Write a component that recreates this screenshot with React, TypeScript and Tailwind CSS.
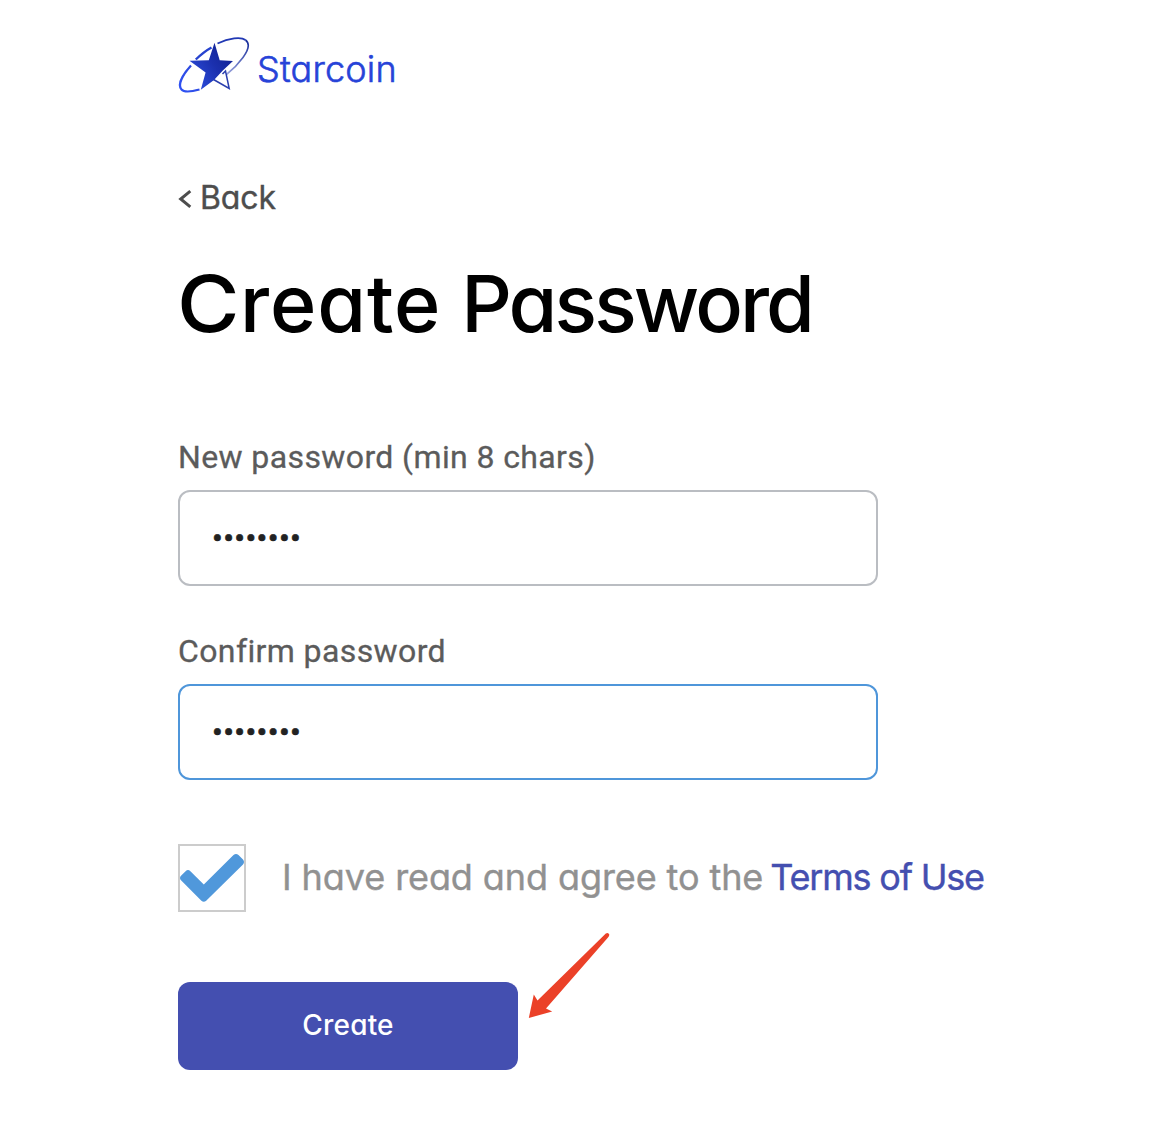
import React from "react";

const geo = "font-['Inter',sans-serif] [font-feature-settings:'cv11'] whitespace-nowrap";

function Logo() {
  return (
    <div className="flex h-[60px] items-start">
      <svg className="h-[60px] w-[74px] shrink-0" viewBox="178 36 74 60" fill="none">
        <defs>
          <linearGradient id="orbit" x1="179" y1="90" x2="249" y2="40" gradientUnits="userSpaceOnUse">
            <stop offset="0" stopColor="#2f52f5" />
            <stop offset="0.6" stopColor="#2a3fc4" />
            <stop offset="1" stopColor="#1a2f9c" />
          </linearGradient>
          <linearGradient id="fade" x1="248" y1="42" x2="220" y2="80" gradientUnits="userSpaceOnUse">
            <stop offset="0" stopColor="#1a2f9c" />
            <stop offset="1" stopColor="#b9c0ec" />
          </linearGradient>
          <linearGradient id="star" x1="195" y1="80" x2="228" y2="58" gradientUnits="userSpaceOnUse">
            <stop offset="0" stopColor="#2a4ad8" />
            <stop offset="0.6" stopColor="#1b30ae" />
            <stop offset="1" stopColor="#14269a" />
          </linearGradient>
        </defs>
        <path d="M191 65.500C182 75.500 177.500 85 181.500 89.500C184 92.500 191 91.800 199.500 89.500" stroke="url(#orbit)" strokeWidth="2.200" />
        <path d="M195.800 59.500C201 54.500 206 50.500 211.500 47.500" stroke="#2743cf" strokeWidth="2.400" />
        <path d="M217.500 43.500C229 38 241 36.500 245.500 40" stroke="#2138b4" strokeWidth="1.900" />
        <path d="M245.500 40C250 43.500 248.500 50 243 57.500C239 63 233 69.500 226.500 74.500" stroke="url(#fade)" strokeWidth="1.600" />
        <path d="M222.500 74L225.500 71L229.200 88.500L213.500 79.500" stroke="#2b3fae" strokeWidth="1.500" />
        <path d="M214.500 42.800L219.700 60.300L233 61L222.800 70.500L214 80L200.800 89.800L205.600 72.500L189.500 60.800L208.800 60.300Z" fill="url(#star)" />
      </svg>
      <span className={`${geo} ml-[5px] mt-[11px] text-[36px] leading-[44px] font-light tracking-[0.2px] text-[#2743d8] [-webkit-text-stroke:0.6px_#2743d8]`}>Starcoin</span>
    </div>
  );
}

function Field({ label, focused }: { label: string; focused?: boolean }) {
  return (
    <label className="flex flex-col">
      <span className="h-[40px] text-[32px] leading-[40px] font-normal tracking-[0.39px] whitespace-nowrap text-[#5b5b5b] [-webkit-text-stroke:0.3px_#5b5b5b]">{label}</span>
      <input
        type="password"
        defaultValue="starcoin"
        className={`mt-[13px] h-[96px] w-[700px] rounded-[12px] border-2 bg-white px-[32px] text-[32px] tracking-[0.35px] text-[#222] outline-none [-webkit-text-stroke:0.6px_#222] ${focused ? "border-[#4f96da]" : "border-[#babdc2]"}`}
      />
    </label>
  );
}

export default function App() {
  return (
    <main className="flex h-[1134px] w-[1172px] flex-col items-start overflow-hidden bg-white pt-[36px] pl-[178px] font-['Roboto',sans-serif]">
      <Logo />
      <a className={`${geo} mt-[82px] flex h-[40px] items-center text-[32px] leading-[40px] text-[#4d4d4d]`}>
        <svg className="mr-[8px] mt-[1px] h-[18px] w-[14px]" viewBox="0 0 14 18" fill="none" stroke="#4d4d4d" strokeWidth="3">
          <path d="M12.300 1.200L2.700 9L12.300 16.800" />
        </svg>
        <span className="tracking-[-0.1px] [-webkit-text-stroke:0.4px_#4d4d4d]">Back</span>
      </a>
      <h1 className={`${geo} mt-[35px] h-[100px] text-[79px] leading-[100px] font-medium text-black`}>
        <span className="-ml-px inline-block origin-left scale-x-[1.080] tracking-[5px]">C</span>
        <span className="tracking-[0.9px]">reate</span>
        <span className="tracking-[-1px]"> </span>
        <span className="tracking-[-2.900px]">Password</span>
      </h1>
      <form className="mt-[84px] flex flex-col items-start">
        <Field label="New password (min 8 chars)" />
        <div className="h-[45px]" />
        <Field label="Confirm password" focused />
        <div className="mt-[64px] flex h-[68px] items-center">
          <span className="flex h-[68px] w-[68px] items-center justify-center border-2 border-[#ccc]">
            <svg className="h-[64px] w-[64px]" viewBox="0 0 64 64">
              <path d="M1 29.800L5.600 25.200Q8 23 10.400 25.200L23.800 38.500L53.500 9Q56 7 58.500 9L63 13.500Q65 16 63 18.500L26.200 54.700Q23.800 57 21.400 54.700L1 34.300Q-1 32 1 29.800Z" fill="#5098db" />
            </svg>
          </span>
          <span className={`${geo} -mt-[2px] ml-[36px] text-[36px] leading-[48px] tracking-[-0.090px] text-[#919191] [-webkit-text-stroke:0.4px_#919191]`}>
            I have read and agree to the
          </span>
          <a className={`${geo} -mt-[2px] ml-[7px] text-[36px] leading-[48px] tracking-[-1.200px] text-[#444fb0] [-webkit-text-stroke:0.4px_#444fb0]`}>Terms of Use</a>
        </div>
        <div className="relative mt-[70px]">
          <button type="button" className={`${geo} flex h-[88px] w-[340px] items-center justify-center rounded-[12px] bg-[#444fb0] pb-[3px] text-[28px] font-medium tracking-[0.2px] text-white`}>
            Create
          </button>
          <svg className="absolute -top-[52px] left-[348px] h-[92px] w-[88px]" viewBox="526 930 88 92">
            <path d="M605.800 933.500Q608.300 932 609.300 934.500Q609.400 936.200 608 937.500L546 1008.500L552.200 1011.500L528.800 1018L533.800 994.500L537.500 1000.500Z" fill="#eb4128" />
          </svg>
        </div>
      </form>
    </main>
  );
}
